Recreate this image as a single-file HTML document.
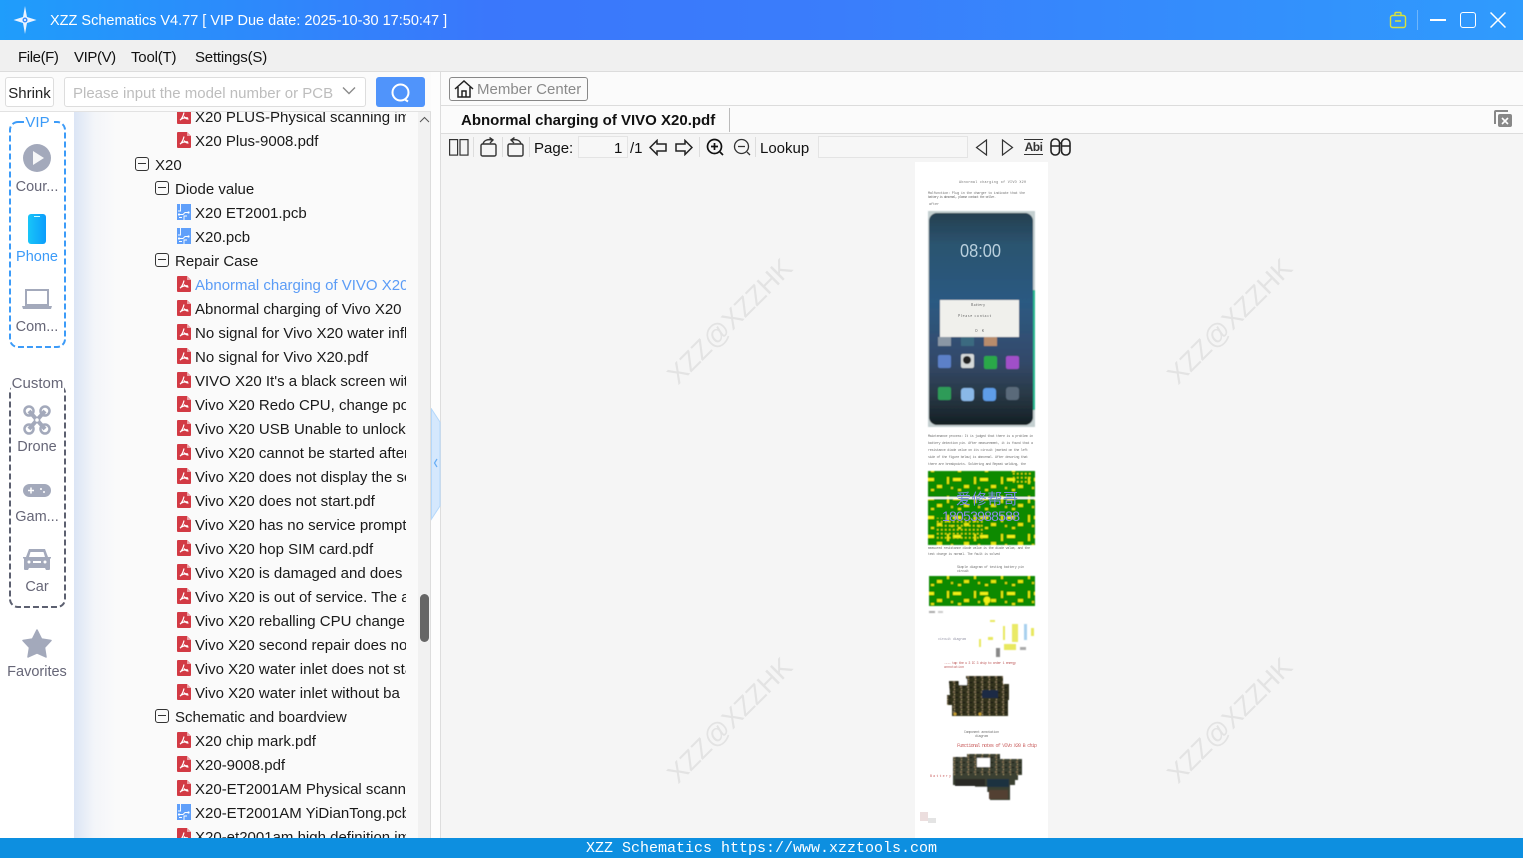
<!DOCTYPE html>
<html><head><meta charset="utf-8"><title>XZZ Schematics</title>
<style>
*{box-sizing:border-box}
html,body{margin:0;padding:0;width:1523px;height:858px;overflow:hidden;background:#fff;font-family:"Liberation Sans","Noto Sans CJK SC",sans-serif;color:#111}
.a{position:absolute}
.t{position:absolute;white-space:nowrap;font-size:15px;line-height:24px;height:24px}
.row{position:absolute;height:24px;line-height:24px;font-size:15px;white-space:nowrap;overflow:hidden;color:#1a1a1a}
.row svg{position:absolute;left:0;top:2px}
.file{left:177px;width:229px;padding-left:18px}
.minus{position:absolute;width:14px;height:14px;margin-top:-1px;border:1.300px solid #333;border-radius:3px}
.minus:after{content:"";position:absolute;left:2px;right:2px;top:5px;height:1.300px;background:#333}
.nav{position:absolute;left:0;width:74px;text-align:center;font-size:14.500px;line-height:20px;color:#667;margin-top:1px}
.wm{position:absolute;font-size:26.500px;color:#e3e3e3;transform:rotate(-45deg);white-space:nowrap;width:200px;text-align:center}
.sep{position:absolute;top:137px;height:20px;width:1px;background:#ddd}
</style></head><body>
<svg width="0" height="0" style="position:absolute"><defs>
<symbol id="pdf" viewBox="0 0 14 16"><path d="M1 0H10L14 4V15a1 1 0 0 1-1 1H1a1 1 0 0 1-1-1V1a1 1 0 0 1 1-1z" fill="#d23a44"/><path d="M10 0L14 4H10z" fill="#eda2a8"/><path d="M7 4.500C6.500 7 5.500 10 3 12.200M7 8.500C8 10 9.500 11 11.500 11M3.500 11.500C6 10 9 9.500 11 10" stroke="#fff" stroke-width="1.200" fill="none"/></symbol>
<symbol id="pcb" viewBox="0 0 14 16"><rect width="14" height="16" fill="#5f9ffa"/><path d="M3.500 0V7H1M7 16V12H10M2 10.500H6L8 8.500H11M2 13.500H5" stroke="#fff" stroke-width=".9" fill="none"/><circle cx="11.500" cy="8.500" r="1.100" fill="#fff"/><circle cx="2" cy="10.500" r="1.100" fill="#fff"/></symbol>
</defs></svg>

<!-- title bar -->
<div class="a" style="left:0;top:0;width:1523px;height:40px;background:linear-gradient(90deg,#1f9dfb 0,#3a77fb 32%,#3a7dfb 55%,#2f9bfd 100%)"></div>
<svg class="a" style="left:12px;top:5px" width="26" height="30" viewBox="0 0 26 30"><path d="M13 1L15 12 24.500 15 15 18 13 29 11 18 1.500 15 11 12z" fill="#eaf3ff"/><circle cx="13" cy="15" r="2.500" fill="#3b8dfb"/><circle cx="13" cy="15" r="1" fill="#fff"/></svg>
<div class="t" style="left:50px;top:9px;color:#fff;font-size:14.500px;line-height:25px">XZZ Schematics V4.77 [ VIP Due date: 2025-10-30 17:50:47 ]</div>
<svg class="a" style="left:1389px;top:11px" width="18" height="18" viewBox="0 0 18 18" fill="none" stroke="#d8e23c" stroke-width="1.400"><rect x="1.500" y="4.500" width="15" height="12" rx="2"/><path d="M6 4.500V2.500a1 1 0 0 1 1-1H11a1 1 0 0 1 1 1V4.500M6 10H12"/></svg>
<div class="a" style="left:1417px;top:10px;width:1px;height:20px;background:#6fb6fb"></div>
<div class="a" style="left:1430px;top:19px;width:16px;height:2px;background:#fff"></div>
<div class="a" style="left:1460px;top:12px;width:16px;height:16px;border:1.600px solid #fff;border-radius:3px"></div>
<svg class="a" style="left:1490px;top:12px" width="16" height="16"><path d="M0.500 0.500L15.500 15.500M15.500 0.500L0.500 15.500" stroke="#fff" stroke-width="1.500"/></svg>

<!-- menu -->
<div class="a" style="left:0;top:40px;width:1523px;height:32px;background:#f0f0f0;border-bottom:1px solid #dcdcdc"></div>
<div class="t" style="left:18px;top:46px;letter-spacing:-.4px">File(F)</div>
<div class="t" style="left:74px;top:46px;letter-spacing:-.4px">VIP(V)</div>
<div class="t" style="left:131px;top:46px;letter-spacing:-.2px">Tool(T)</div>
<div class="t" style="left:195px;top:46px;letter-spacing:-.2px">Settings(S)</div>

<!-- search row -->
<div class="a" style="left:0;top:72px;width:431px;height:40px;background:#fbfbfb;border-bottom:1px solid #e2e2e2"></div>
<div class="a" style="left:5px;top:77px;width:49px;height:30px;border:1px solid #ddd;border-radius:3px;background:#fff;text-align:center;font-size:15px;line-height:31px;color:#222">Shrink</div>
<div class="a" style="left:64px;top:77px;width:302px;height:30px;border:1px solid #ddd;border-radius:3px;background:#fff;font-size:15px;line-height:31px;color:#bdbdbd;padding-left:8px">Please input the model number or PCB</div>
<svg class="a" style="left:342px;top:86px" width="14" height="10"><path d="M1 1.500L7 7.500 13 1.500" fill="none" stroke="#8a8a8a" stroke-width="1.400"/></svg>
<div class="a" style="left:376px;top:77px;width:49px;height:30px;background:#5094fb;border-radius:3px"></div>
<svg class="a" style="left:390px;top:82px" width="22" height="22" fill="none" stroke="#fff" stroke-width="2"><circle cx="10.500" cy="10.500" r="8"/><path d="M15 17.500L18 19.500"/></svg>

<!-- left nav -->
<div class="a" style="left:0;top:112px;width:74px;height:726px;background:#fff"></div>
<svg class="a" style="left:8px;top:120px" width="59" height="490" fill="none">
<rect x="2" y="2" width="55" height="225" rx="8" stroke="#3c9bf8" stroke-width="2" stroke-dasharray="6 3"/>
<rect x="2" y="265" width="55" height="222" rx="8" stroke="#5c6070" stroke-width="2" stroke-dasharray="6 3"/>
</svg>
<div class="a" style="left:24px;top:113px;width:27px;height:20px;background:#fff;text-align:center;color:#3c9bf8;font-size:15px;line-height:20px">VIP</div>
<svg class="a" style="left:23px;top:144px" width="28" height="28"><circle cx="14" cy="14" r="14" fill="#a3a9bb"/><path d="M10 7L21 14 10 21z" fill="#fff" fill-opacity=".9"/></svg>
<div class="nav" style="top:176px">Cour...</div>
<div class="a" style="left:28px;top:214px;width:18px;height:30px;border-radius:3px;background:linear-gradient(90deg,#18c5f8,#0c9dfc)"></div>
<div class="a" style="left:34px;top:216px;width:6px;height:1px;background:#cff"></div>
<div class="nav" style="top:246px;color:#3c9bf8">Phone</div>
<svg class="a" style="left:22px;top:288px" width="30" height="22" fill="#a3a9bb"><path d="M3 1H27V18H3zM5 3V16H25V3z" fill-rule="evenodd"/><path d="M0 18H30L29 21H1z"/></svg>
<div class="nav" style="top:316px">Com...</div>
<div class="a" style="left:11px;top:374px;width:53px;height:19px;background:#fff;text-align:center;color:#667;font-size:15px;line-height:20px">Custom</div>
<svg class="a" style="left:23px;top:405px" width="28" height="30" fill="none" stroke="#a3a9bb"><path d="M6 6L22 24M22 6L6 24" stroke-width="4"/><circle cx="6" cy="6" r="4.500" stroke-width="2.500"/><circle cx="22" cy="6" r="4.500" stroke-width="2.500"/><circle cx="6" cy="24" r="4.500" stroke-width="2.500"/><circle cx="22" cy="24" r="4.500" stroke-width="2.500"/><circle cx="14" cy="15" r="2.500" fill="#fff" stroke-width="1.500"/></svg>
<div class="nav" style="top:436px">Drone</div>
<svg class="a" style="left:23px;top:484px" width="28" height="14"><rect width="28" height="13" rx="6.500" fill="#a3a9bb"/><path d="M5 6.500H11M8 3.500V9.500" stroke="#fff" stroke-width="1.500"/><circle cx="18" cy="5" r="1" fill="#fff"/><circle cx="21" cy="8" r="1" fill="#fff"/></svg>
<div class="nav" style="top:506px">Gam...</div>
<svg class="a" style="left:23px;top:548px" width="28" height="23"><path d="M6 1H22L25 9H28V10L27 11V21a1 1 0 0 1-1 1H23L22 20H6L5 22H2a1 1 0 0 1-1-1V11L0 10V9H3z" fill="#a3a9bb"/><path d="M7.500 4H20.500L22 9H6z" fill="#fff"/><circle cx="6" cy="14" r="1.500" fill="#fff"/><circle cx="22" cy="14" r="1.500" fill="#fff"/><rect x="10" y="13" width="8" height="2" fill="#fff"/></svg>
<div class="nav" style="top:576px">Car</div>
<svg class="a" style="left:22px;top:629px" width="30" height="29"><path d="M15 1L19.500 10 29 11.500 22.500 18.500 24 28 15 24 6 28 7.500 18.500 1 11.500 10.500 10z" fill="#a3a9bb" stroke="#a3a9bb" stroke-width="1.500" stroke-linejoin="round"/></svg>
<div class="nav" style="top:661px">Favorites</div>

<!-- tree -->
<div class="a" style="left:74px;top:112px;width:345px;height:726px;background:linear-gradient(90deg,#dbe5f5 0,#f3f5f9 20px,#fafafa 42px,#fafafa 100%);overflow:hidden">
<div class="a" style="left:-74px;top:-111px;width:500px;height:837px">
<div class="row file" style="top:105px"><svg width="14" height="16"><use href="#pdf"/></svg>X20 PLUS-Physical scanning image.pdf</div>
<div class="row file" style="top:129px"><svg width="14" height="16"><use href="#pdf"/></svg>X20 Plus-9008.pdf</div>
<div class="minus" style="left:135px;top:157px"></div><div class="row" style="left:155px;top:153px">X20</div>
<div class="minus" style="left:155px;top:181px"></div><div class="row" style="left:175px;top:177px">Diode value</div>
<div class="row file" style="top:201px"><svg width="14" height="16"><use href="#pcb"/></svg>X20 ET2001.pcb</div>
<div class="row file" style="top:225px"><svg width="14" height="16"><use href="#pcb"/></svg>X20.pcb</div>
<div class="minus" style="left:155px;top:253px"></div><div class="row" style="left:175px;top:249px">Repair Case</div>
<div class="row file" style="top:273px;color:#5b9cf6"><svg width="14" height="16"><use href="#pdf"/></svg>Abnormal charging of VIVO X20.pdf</div>
<div class="row file" style="top:297px"><svg width="14" height="16"><use href="#pdf"/></svg>Abnormal charging of Vivo X20 2.pdf</div>
<div class="row file" style="top:321px"><svg width="14" height="16"><use href="#pdf"/></svg>No signal for Vivo X20 water inflow.pdf</div>
<div class="row file" style="top:345px"><svg width="14" height="16"><use href="#pdf"/></svg>No signal for Vivo X20.pdf</div>
<div class="row file" style="top:369px"><svg width="14" height="16"><use href="#pdf"/></svg>VIVO X20 It's a black screen with water</div>
<div class="row file" style="top:393px"><svg width="14" height="16"><use href="#pdf"/></svg>Vivo X20 Redo CPU, change power</div>
<div class="row file" style="top:417px"><svg width="14" height="16"><use href="#pdf"/></svg>Vivo X20 USB Unable to unlock</div>
<div class="row file" style="top:441px"><svg width="14" height="16"><use href="#pdf"/></svg>Vivo X20 cannot be started after</div>
<div class="row file" style="top:465px"><svg width="14" height="16"><use href="#pdf"/></svg>Vivo X20 does not display the screen</div>
<div class="row file" style="top:489px"><svg width="14" height="16"><use href="#pdf"/></svg>Vivo X20 does not start.pdf</div>
<div class="row file" style="top:513px"><svg width="14" height="16"><use href="#pdf"/></svg>Vivo X20 has no service prompt</div>
<div class="row file" style="top:537px"><svg width="14" height="16"><use href="#pdf"/></svg>Vivo X20 hop SIM card.pdf</div>
<div class="row file" style="top:561px"><svg width="14" height="16"><use href="#pdf"/></svg>Vivo X20 is damaged and does</div>
<div class="row file" style="top:585px"><svg width="14" height="16"><use href="#pdf"/></svg>Vivo X20 is out of service. The a</div>
<div class="row file" style="top:609px"><svg width="14" height="16"><use href="#pdf"/></svg>Vivo X20 reballing CPU change</div>
<div class="row file" style="top:633px"><svg width="14" height="16"><use href="#pdf"/></svg>Vivo X20 second repair does not</div>
<div class="row file" style="top:657px"><svg width="14" height="16"><use href="#pdf"/></svg>Vivo X20 water inlet does not start</div>
<div class="row file" style="top:681px"><svg width="14" height="16"><use href="#pdf"/></svg>Vivo X20 water inlet without ba</div>
<div class="minus" style="left:155px;top:709px"></div><div class="row" style="left:175px;top:705px">Schematic and boardview</div>
<div class="row file" style="top:729px"><svg width="14" height="16"><use href="#pdf"/></svg>X20 chip mark.pdf</div>
<div class="row file" style="top:753px"><svg width="14" height="16"><use href="#pdf"/></svg>X20-9008.pdf</div>
<div class="row file" style="top:777px"><svg width="14" height="16"><use href="#pdf"/></svg>X20-ET2001AM Physical scanning</div>
<div class="row file" style="top:801px"><svg width="14" height="16"><use href="#pcb"/></svg>X20-ET2001AM YiDianTong.pcb</div>
<div class="row file" style="top:825px;height:12px"><svg width="14" height="16"><use href="#pdf"/></svg>X20-et2001am high definition image</div>
</div></div>
<div class="a" style="left:418px;top:112px;width:13px;height:726px;background:#f1f1f1;border-right:1px solid #ddd"></div>
<svg class="a" style="left:419px;top:116px" width="11" height="8"><path d="M1 6L5.500 1.500 10 6" fill="none" stroke="#555" stroke-width="1"/></svg>
<div class="a" style="left:420px;top:594px;width:9px;height:48px;border-radius:5px;background:#666"></div>

<!-- splitter -->
<div class="a" style="left:431px;top:72px;width:10px;height:766px;background:#fdfdfd;border-right:1px solid #ddd"></div>
<svg class="a" style="left:431px;top:408px" width="10" height="113"><path d="M0.500 1L9 14V98L0.500 111z" fill="#d5e8fd" stroke="#b4d8fb"/><path d="M6 51L3.500 55 6 59" fill="none" stroke="#66adf5" stroke-width="1.200"/></svg>

<!-- right top -->
<div class="a" style="left:441px;top:72px;width:1082px;height:34px;background:#fbfbfb;border-bottom:1px solid #dcdcdc"></div>
<div class="a" style="left:449px;top:77px;width:139px;height:24px;border:1px solid #888;border-radius:3px;background:#fafafa;color:#8a8a8a;font-size:15px;line-height:24px;padding-left:27px">Member Center</div>
<svg class="a" style="left:454px;top:79px" width="20" height="20" fill="none" stroke="#222" stroke-width="1.500"><path d="M1 10L10 2 19 10M4 8V18H16V8M8 18V12H12V18"/></svg>
<div class="a" style="left:441px;top:106px;width:1082px;height:28px;background:#fbfbfb;border-bottom:1px solid #dcdcdc"></div>
<div class="t" style="left:461px;top:108px;font-weight:bold;color:#111;line-height:25px">Abnormal charging of VIVO X20.pdf</div>
<div class="a" style="left:729px;top:108px;width:1px;height:24px;background:#bbb"></div>
<svg class="a" style="left:1494px;top:110px" width="18" height="18"><path d="M1 14V2a1 1 0 0 1 1-1H14" fill="none" stroke="#888" stroke-width="2"/><rect x="4" y="4" width="14" height="13" rx="2" fill="#888"/><path d="M8 8L14 14M14 8L8 14" stroke="#fff" stroke-width="1.600"/></svg>

<!-- pdf toolbar -->
<div class="a" style="left:441px;top:134px;width:1082px;height:28px;background:#f5f5f5"></div>
<svg class="a" style="left:449px;top:139px" width="20" height="17" fill="none" stroke="#333" stroke-width="1.200"><rect x="0.600" y="0.600" width="8" height="15.500"/><rect x="11" y="0.600" width="8" height="15.500"/></svg>
<div class="sep" style="left:473px"></div>
<svg class="a" style="left:479px;top:137px" width="20" height="20" fill="none" stroke="#333" stroke-width="1.400"><rect x="2" y="7" width="15" height="12" rx="1.500"/><path d="M4 7C5 3 9 2 13 3M10.500 0.500L14 3 11 6"/></svg>
<div class="sep" style="left:502px"></div>
<svg class="a" style="left:505px;top:137px" width="20" height="20" fill="none" stroke="#333" stroke-width="1.400"><rect x="3" y="7" width="15" height="12" rx="1.500"/><path d="M16 7C15 3 11 2 7 3M9.500 0.500L6 3 9 6"/></svg>
<div class="sep" style="left:529px"></div>
<div class="t" style="left:534px;top:136px;line-height:25px">Page:</div>
<div class="a" style="left:578px;top:136px;width:50px;height:22px;border:1px solid #e4e4e4;background:#f7f7f7"></div>
<div class="t" style="left:614px;top:136px;line-height:25px">1</div>
<div class="t" style="left:630px;top:136px;line-height:25px">/1</div>
<svg class="a" style="left:649px;top:139px" width="18" height="17" fill="none" stroke="#222" stroke-width="1.500"><path d="M1 8.500L8 1.500V5H17V12H8V15.500z"/></svg>
<svg class="a" style="left:675px;top:139px" width="18" height="17" fill="none" stroke="#222" stroke-width="1.500"><path d="M17 8.500L10 1.500V5H1V12H10V15.500z"/></svg>
<div class="sep" style="left:699px"></div>
<svg class="a" style="left:706px;top:138px" width="18" height="19" fill="none" stroke="#111" stroke-width="1.700"><circle cx="8.500" cy="8.500" r="7"/><path d="M5 8.500H12M8.500 5V12M14 14L17 17"/></svg>
<svg class="a" style="left:733px;top:138px" width="18" height="19" fill="none" stroke="#333" stroke-width="1.300"><circle cx="8.500" cy="8.500" r="7"/><path d="M5 8.500H12M14 14L17 17"/></svg>
<div class="sep" style="left:755px"></div>
<div class="t" style="left:760px;top:136px;line-height:25px">Lookup</div>
<div class="a" style="left:818px;top:136px;width:150px;height:22px;border:1px solid #e4e4e4;background:#f7f7f7"></div>
<svg class="a" style="left:975px;top:139px" width="13" height="17"><path d="M11.500 1L1.500 8.500 11.500 16z" fill="none" stroke="#333" stroke-width="1.200"/></svg>
<svg class="a" style="left:1001px;top:139px" width="13" height="17"><path d="M1.500 1L11.500 8.500 1.500 16z" fill="none" stroke="#333" stroke-width="1.200"/></svg>
<div class="a" style="left:1024px;top:139px;width:19px;height:16px;border-top:1px solid #333;border-bottom:1px solid #333;font-size:12px;font-weight:bold;line-height:14px;color:#333;text-align:center;letter-spacing:-.5px">Abi</div>
<svg class="a" style="left:1050px;top:138px" width="21" height="18" fill="none" stroke="#222" stroke-width="1.600"><rect x="1" y="1" width="8.500" height="16" rx="4"/><rect x="11.500" y="1" width="8.500" height="16" rx="4"/><path d="M1 8H9.500M11.500 8H20M9.500 5H11.500"/></svg>

<!-- viewer -->
<div class="a" style="left:441px;top:162px;width:1082px;height:676px;background:#f5f5f5"></div>
<div class="a" style="left:915px;top:162px;width:133px;height:676px;background:#fff"></div>
<div class="wm" style="left:630px;top:306px">XZZ@XZZHK</div>
<div class="wm" style="left:1130px;top:306px">XZZ@XZZHK</div>
<div class="wm" style="left:630px;top:705px">XZZ@XZZHK</div>
<div class="wm" style="left:1130px;top:705px">XZZ@XZZHK</div>
<svg class="a" style="left:915px;top:162px" width="133" height="676" viewBox="915 162 133 676" font-family="Liberation Mono, monospace">
<defs>
<filter id="b"><feGaussianBlur stdDeviation=".6"/></filter>
<filter id="b2"><feGaussianBlur stdDeviation=".4"/></filter>
<linearGradient id="ph" x1="0" y1="0" x2="0" y2="1"><stop offset="0" stop-color="#253f50"/><stop offset=".15" stop-color="#2b5470"/><stop offset=".42" stop-color="#2c5a82"/><stop offset=".7" stop-color="#33496a"/><stop offset=".85" stop-color="#2a3a48"/><stop offset="1" stop-color="#141f24"/></linearGradient>
<pattern id="pcbp" width="27" height="19" patternUnits="userSpaceOnUse"><rect x="2" y="2" width="2" height="7" fill="#e6e60a"/><rect x="8" y="3" width="8" height="3" fill="#f0f012"/><rect x="6" y="12" width="2" height="2" fill="#d8d810"/><rect x="19" y="10" width="5" height="3" fill="#e6e60a"/><rect x="13" y="14" width="3" height="2" fill="#e6e60a"/></pattern>
<pattern id="pcbq" width="4" height="4" patternUnits="userSpaceOnUse"><rect x="1" y="1" width="1.500" height="1.500" fill="#dede10"/></pattern>
<pattern id="boardp" width="7" height="5" patternUnits="userSpaceOnUse"><rect x="1" y="1" width="2" height="2" fill="#7a6a50"/><rect x="4" y="2" width="2" height="1" fill="#101010"/><rect x="2" y="4" width="1" height="1" fill="#b0a070"/></pattern>
</defs>
<g fill="#777" font-size="3.400">
<text x="959" y="183" textLength="67">Abnormal charging of VIVO X20</text>
<text x="928" y="194" textLength="97">Malfunction: Plug in the charger to indicate that the</text>
<text x="928" y="198" textLength="68">battery is abnormal, please contact the seller.</text>
<text x="929" y="205" textLength="10">after</text>
</g>
<g filter="url(#b)">
<rect x="928" y="211" width="107" height="216" fill="#c4cfd0"/>
<rect x="1030" y="290" width="5" height="120" fill="#2cb890"/>
<rect x="929" y="213" width="104" height="212" rx="8" fill="url(#ph)"/>
<rect x="940" y="300" width="79" height="37" fill="#f0f0ec"/>
<rect x="938" y="337" width="13" height="9" fill="#8a97a5"/><rect x="961" y="337" width="13" height="9" fill="#3a6a80"/><rect x="984" y="337" width="13" height="9" fill="#b88c6c"/>
<rect x="938" y="355" width="13" height="13" rx="2" fill="#5c80c8"/><rect x="961" y="354" width="13" height="14" rx="2" fill="#d5d9d9"/><rect x="984" y="356" width="13" height="13" rx="2" fill="#2ca84a"/><rect x="1006" y="356" width="13" height="13" rx="2" fill="#a050c8"/>
<rect x="938" y="387" width="13" height="13" rx="2" fill="#2f9b58"/><rect x="961" y="388" width="13" height="13" rx="3" fill="#8ab8e8"/><rect x="983" y="388" width="13" height="13" rx="3" fill="#5e9de8"/><rect x="1006" y="387" width="13" height="13" rx="3" fill="#5a6a7a"/>
<circle cx="967" cy="360" r="4" fill="#232323"/>
</g>
<text x="960" y="257" fill="#b9cfdd" font-size="18" font-family="Liberation Sans, sans-serif" textLength="41" lengthAdjust="spacingAndGlyphs">08:00</text>
<g fill="#666" font-size="3.500" font-family="Noto Sans CJK SC, sans-serif"><text x="971" y="306" textLength="14">Battery</text><text x="958" y="317" textLength="33">Please contact</text><text x="975" y="332" textLength="9">OK</text></g>
<g fill="#777" font-size="3.400">
<text x="928" y="437" textLength="105">Maintenance process: It is judged that there is a problem in</text>
<text x="928" y="444" textLength="105">battery detection pin. After measurement, it is found that a</text>
<text x="928" y="451" textLength="100">resistance diode value on its circuit (marked on the left</text>
<text x="928" y="458" textLength="100">side of the figure below) is abnormal. After desoring that</text>
<text x="928" y="465" textLength="98">there are breakpoints. Soldering and Repeat welding, the</text>
</g>
<g filter="url(#b2)">
<rect x="928" y="471" width="107" height="74" fill="#0b8a00"/>
<rect x="928" y="471" width="107" height="74" fill="url(#pcbp)"/>
<rect x="935" y="518" width="50" height="22" fill="url(#pcbq)"/>
<rect x="928" y="497" width="107" height="2" fill="#fff"/>
<rect x="1012" y="472" width="20" height="12" fill="url(#pcbq)"/>
</g>
<text x="956" y="504" fill="#7a8de0" font-size="15" font-family="Noto Sans CJK SC, sans-serif" textLength="62">爱修帮哥</text>
<text x="942" y="521" fill="#8a8ce8" font-size="14" font-family="Liberation Sans, sans-serif" textLength="78">18053988588</text>
<g fill="#777" font-size="3.400">
<text x="928" y="549" textLength="102">measured resistance diode value is the diode value, and the</text>
<text x="928" y="555" textLength="72">test charge is normal. The fault is solved</text>
<text x="957" y="568" textLength="67">Simple diagram of testing battery pin</text>
<text x="957" y="572" textLength="12">circuit</text>
</g>
<g filter="url(#b2)">
<rect x="929" y="576" width="106" height="30" fill="#0b8a00"/>
<rect x="929" y="576" width="106" height="30" fill="url(#pcbp)"/>
<circle cx="987" cy="600" r="3.500" fill="#f0f012"/>
</g>
<g filter="url(#b)" fill="#e8e860">
<rect x="1003" y="626" width="2" height="14"/><rect x="1012" y="624" width="6" height="18" fill="#eaea66"/><rect x="1024" y="624" width="3" height="16" fill="#a8d0ee"/><rect x="1031" y="628" width="3" height="8"/>
<rect x="979" y="639" width="2" height="8"/><rect x="988" y="637" width="5" height="3"/><rect x="996" y="648" width="4" height="9" fill="#888"/><rect x="1004" y="644" width="12" height="6"/><rect x="1020" y="647" width="6" height="3" fill="#aaa"/>
<rect x="929" y="611" width="6" height="2" fill="#aaa"/><rect x="938" y="611" width="5" height="2" fill="#ccc"/><rect x="990" y="620" width="5" height="2"/>
</g>
<text x="938" y="640" fill="#99a" font-size="3.400" textLength="28">circuit diagram</text>
<g fill="#c06060" font-size="3.400"><text x="944" y="664" textLength="72">---- tap the u 3 IC 3 chip to order 1 energy</text><text x="944" y="668" textLength="20">annotation</text></g>
<g filter="url(#b)">
<path d="M949 681H966V676H1003V684H1009V700H1008V716H952V705H947V695H950z" fill="#32301e"/>
<path d="M949 681H966V676H1003V684H1009V700H1008V716H952V705H947V695H950z" fill="url(#boardp)"/>
<rect x="959" y="679" width="8" height="6" fill="#fff"/>
<rect x="982" y="690" width="16" height="8" fill="#1a2a44"/>
<circle cx="955" cy="714" r="1.500" fill="#c8a030"/><circle cx="980" cy="714" r="1.500" fill="#c8a030"/>
</g>
<g fill="#777" font-size="3.400"><text x="964" y="733" textLength="35">Component annotation</text><text x="975" y="737" textLength="13">diagram</text></g>
<text x="957" y="747" fill="#c66" font-size="5" textLength="80">Functional notes of VIVo X20 B chip</text>
<g filter="url(#b)">
<path d="M953 757H967V754H1000V759H1022V775H1018V780H1015V785H1010V800H990V792H975V785H953z" fill="#3a4030"/>
<path d="M953 757H967V754H1000V759H1022V775H953z" fill="url(#boardp)"/>
<rect x="977" y="758" width="13" height="9" fill="#fff"/>
<rect x="955" y="779" width="30" height="7" fill="#2a2a28"/><rect x="987" y="779" width="22" height="8" fill="#1c3040"/><rect x="955" y="787" width="32" height="7" fill="#fff"/>
<rect x="989" y="790" width="19" height="9" fill="#534030"/>
</g>
<text x="930" y="777" fill="#c66" font-size="3.400" textLength="21">Battery</text>
<rect x="920" y="812" width="8" height="9" fill="#ecdede"/><rect x="928" y="818" width="8" height="5" fill="#e4e4e4"/>
</svg>

<!-- footer -->
<div class="a" style="left:0;top:838px;width:1523px;height:20px;background:#0d8fe0;color:#fff;text-align:center;font-family:'Liberation Mono',monospace;font-size:15px;line-height:22px">XZZ Schematics https://www.xzztools.com</div>
</body></html>
